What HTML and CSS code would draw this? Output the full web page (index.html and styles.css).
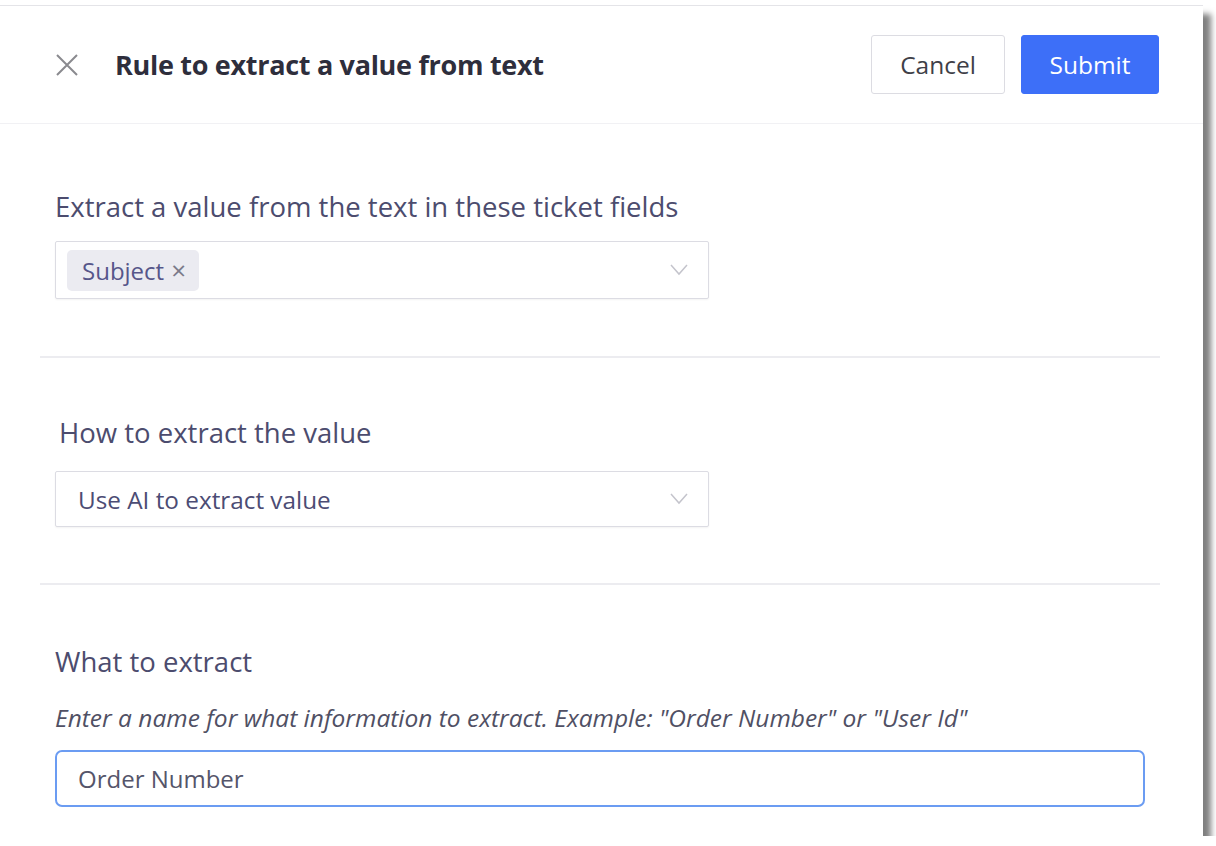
FILE: index.html
```html
<!DOCTYPE html>
<html lang="en">
<head>
<meta charset="utf-8">
<title>Rule to extract a value from text</title>
<link rel="stylesheet" href="styles.css">
</head>
<body>
<div class="panel">
  <header class="header">
    <button class="close" aria-label="Close">
      <svg width="24" height="24" viewBox="0 0 24 24"><path d="M2 2 L22 22 M22 2 L2 22" stroke="#8a8a8f" stroke-width="2" fill="none"/></svg>
    </button>
    <h1 class="title">Rule to extract a value from text</h1>
    <div class="actions">
      <button class="btn btn-cancel">Cancel</button>
      <button class="btn btn-submit">Submit</button>
    </div>
  </header>
  <div class="content">
    <section class="section s1">
      <div class="label">Extract a value from the text in these ticket fields</div>
      <div class="select select-multi">
        <span class="chip">Subject <span class="chip-x">×</span></span>
        <svg class="chev" width="18" height="12" viewBox="0 0 18 12"><path d="M1 1 L9 10 L17 1" stroke="#c4c4cc" stroke-width="1.5" fill="none"/></svg>
      </div>
    </section>
    <hr class="divider">
    <section class="section s2">
      <div class="label label-shift">How to extract the value</div>
      <div class="select select-single">
        <span class="select-value">Use AI to extract value</span>
        <svg class="chev" width="18" height="12" viewBox="0 0 18 12"><path d="M1 1 L9 10 L17 1" stroke="#c4c4cc" stroke-width="1.5" fill="none"/></svg>
      </div>
    </section>
    <hr class="divider">
    <section class="section s3">
      <div class="label">What to extract</div>
      <div class="help">Enter a name for what information to extract. Example: "Order Number" or "User Id"</div>
      <div class="input">Order Number</div>
    </section>
  </div>
</div>
</body>
</html>
```
FILE: styles.css
```css
html, body {
  margin: 0;
  padding: 0;
  background: #ffffff;
}
body {
  font-family: "Open Sans", "Noto Sans", sans-serif;
  color: #4f4f6f;
}
.panel {
  width: 1203px;
  height: 831px;
  margin-top: 5px;
  border-top: 1px solid #e4e4e8;
  box-sizing: border-box;
  background: #fff;
  box-shadow: 8px 9px 6px rgba(0, 0, 0, 0.5);
}
.header {
  height: 118px;
  box-sizing: border-box;
  display: flex;
  align-items: center;
  padding: 0 44px 0 55px;
  border-bottom: 1px solid #f1f1f4;
}
.close {
  width: 24px;
  height: 24px;
  padding: 0;
  border: 0;
  background: none;
  display: flex;
}
.title {
  margin: 0 0 0 36px;
  font-size: 27px;
  font-weight: 700;
  line-height: 34px;
  color: #2e2e3c;
  letter-spacing: -0.3px;
}
.actions {
  margin-left: auto;
  display: flex;
  gap: 16px;
}
.btn {
  height: 59px;
  font-family: "Open Sans", "Noto Sans", sans-serif;
  font-size: 24.5px;
  border-radius: 3px;
  padding: 0;
}
.btn-cancel {
  width: 134px;
  background: #fff;
  border: 1px solid #dcdce2;
  color: #3f3f48;
}
.btn-submit {
  width: 138px;
  background: #3d6ff8;
  border: 1px solid #3d6ff8;
  color: #fff;
}
.content {
  padding: 0 58px 0 55px;
}
.section {
  display: flex;
  flex-direction: column;
}
.label {
  font-size: 27.5px;
  line-height: 30px;
  color: #4c4c6e;
}
.label-shift {
  padding-left: 4px;
}
.s1 {
  padding-top: 68px;
  padding-bottom: 57px;
}
.s1 .label { margin-bottom: 19px; }
.s2 {
  padding-top: 60px;
  padding-bottom: 56px;
}
.s2 .label { margin-bottom: 23px; }
.s3 {
  padding-top: 62px;
  padding-bottom: 31px;
}
.s3 .label { margin-bottom: 27px; }
.divider {
  margin: 0 -15px;
  border: 0;
  border-top: 2px solid #ececf0;
  height: 0;
}
.select {
  width: 654px;
  box-sizing: border-box;
  border: 1px solid #dcdce3;
  border-radius: 2px;
  box-shadow: 0 1px 2px rgba(0, 0, 0, 0.05);
  display: flex;
  align-items: center;
  background: #fff;
}
.select-multi {
  height: 58px;
  padding: 0 20px 0 11px;
}
.select-single {
  height: 56px;
  padding: 0 20px 0 22px;
}
.chip {
  height: 41px;
  width: 132px;
  box-sizing: border-box;
  padding-left: 15px;
  display: flex;
  align-items: center;
  background: #ebebf1;
  border-radius: 5px;
  font-size: 24px;
  color: #56568a;
}
.chip-x {
  margin-left: 7px;
  color: #7a7a8a;
  font-size: 26px;
}
.select-value {
  font-size: 24.3px;
  color: #4c4c74;
}
.chev {
  margin-left: auto;
}
.help {
  font-size: 24.5px;
  font-style: italic;
  line-height: 28px;
  color: #505064;
  margin-bottom: 18px;
}
.input {
  width: 1090px;
  height: 57px;
  box-sizing: border-box;
  border: 2px solid #6b9cf2;
  border-radius: 7px;
  padding-left: 21px;
  display: flex;
  align-items: center;
  font-size: 24px;
  color: #55556a;
}
```
